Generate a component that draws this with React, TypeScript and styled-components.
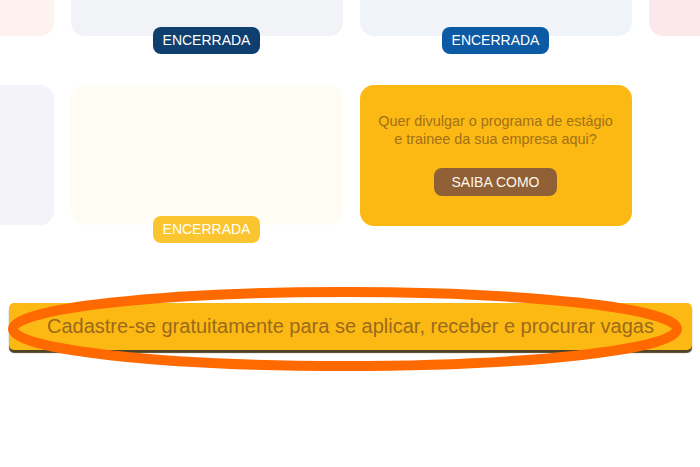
import { type FC } from "react";
import styled, { createGlobalStyle } from "styled-components";

const GlobalStyle = createGlobalStyle`
  html, body {
    margin: 0;
    padding: 0;
    background: #ffffff;
    font-family: "Liberation Sans", Arial, sans-serif;
  }
`;

const Page = styled.div`
  width: 100%;
  height: 467px;
  overflow: hidden;
`;

const GridWrap = styled.div`
  display: flex;
  justify-content: center;
  margin-top: -104px;
  padding-left: 2px;
`;

const Grid = styled.div`
  flex: 0 0 auto;
  display: grid;
  grid-template-columns: repeat(4, 272px);
  column-gap: 17px;
  row-gap: 31px;
`;

const Cell = styled.div`
  display: flex;
  flex-direction: column;
  align-items: center;
`;

const Card = styled.div<{ $bg: string }>`
  width: 100%;
  height: 140px;
  border-radius: 14px;
  background: ${(p) => p.$bg};
`;

const Badge = styled.span<{ $bg: string }>`
  margin-top: -9px;
  height: 27px;
  line-height: 27px;
  padding: 0 10px;
  border-radius: 8px;
  background: ${(p) => p.$bg};
  color: #ffffff;
  font-size: 14px;
`;

const PromoCard = styled.div`
  height: 141px;
  border-radius: 14px;
  background: #fdb913;
  display: flex;
  flex-direction: column;
  align-items: center;
  padding-top: 27px;
  box-sizing: border-box;
`;

const PromoText = styled.p`
  margin: 0;
  font-size: 14.4px;
  line-height: 18px;
  color: #a1701a;
  text-align: center;
`;

const PromoButton = styled.button`
  margin-top: 20px;
  height: 28px;
  padding: 0 18px;
  border: none;
  border-radius: 8px;
  background: #8f5f35;
  color: #fff6ea;
  font-family: inherit;
  font-size: 14px;
`;

const BarWrap = styled.div`
  position: relative;
  margin: 60px 8px 0 9px;
`;

const SignupBar = styled.div`
  height: 47px;
  border-radius: 5px;
  background: #fdb913;
  box-shadow: 0 3px 1px #4f4326;
  display: flex;
  align-items: center;
  justify-content: center;
  color: #9a6a1c;
  font-size: 20px;
`;

const Highlight = styled.svg`
  position: absolute;
  left: -9px;
  top: -20px;
  width: 700px;
  height: 100px;
  pointer-events: none;
`;

const rowOne = [
  { bg: "#fdf2f0" },
  { bg: "#f2f3f7", badge: "#0f3f6f" },
  { bg: "#f0f4f9", badge: "#0c59a4" },
  { bg: "#fbe8eb" },
];

const App: FC = () => {
  return (
    <Page>
      <GlobalStyle />
      <GridWrap>
        <Grid>
          {rowOne.map((c, i) => (
            <Cell key={i}>
              <Card $bg={c.bg} />
              {c.badge && <Badge $bg={c.badge}>ENCERRADA</Badge>}
            </Cell>
          ))}

          <Cell>
            <Card $bg="#f3f3f9" />
          </Cell>
          <Cell>
            <Card $bg="#fffcf3" />
            <Badge $bg="#fbc530">ENCERRADA</Badge>
          </Cell>
          <PromoCard>
            <PromoText>
              Quer divulgar o programa de estágio
              <br />e trainee da sua empresa aqui?
            </PromoText>
            <PromoButton>SAIBA COMO</PromoButton>
          </PromoCard>
          <div />
        </Grid>
      </GridWrap>

      <BarWrap>
        <SignupBar>
          Cadastre-se gratuitamente para se aplicar, receber e procurar vagas
        </SignupBar>
        <Highlight viewBox="0 0 700 100">
          <ellipse
            cx="345"
            cy="46"
            rx="332"
            ry="37"
            fill="none"
            stroke="#ff6a00"
            strokeWidth="10"
          />
        </Highlight>
      </BarWrap>
    </Page>
  );
};

export default App;
